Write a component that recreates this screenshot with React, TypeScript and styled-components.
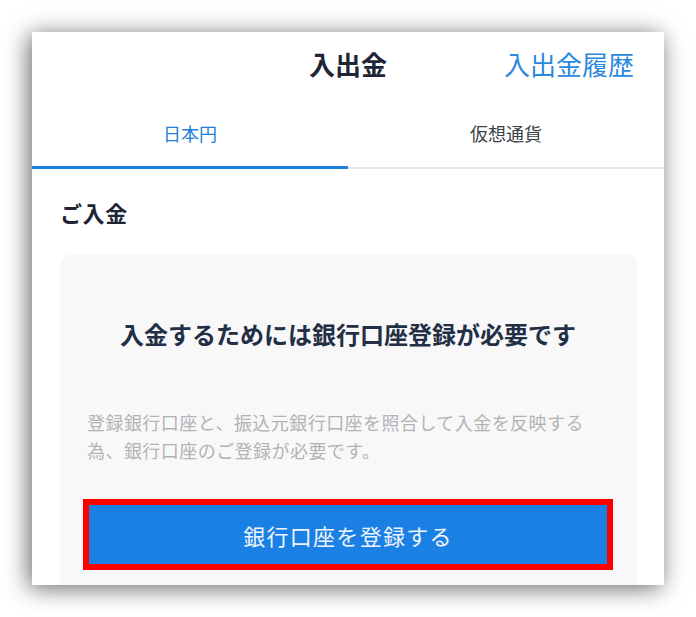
import React from "react";
import styled, { createGlobalStyle } from "styled-components";

const Global = createGlobalStyle`
  html, body { margin: 0; padding: 0; background: #ffffff; }
  body { font-family: "Noto Sans CJK JP", "Noto Sans", sans-serif; }
  * { box-sizing: border-box; }
`;

const Stage = styled.div`
  width: 696px;
  height: 617px;
  padding: 32px 0 0 32px;
  background: #ffffff;
`;

const Phone = styled.div`
  width: 632px;
  height: 553px;
  overflow: hidden;
  background: #ffffff;
  box-shadow: -3px 3px 22px rgba(0, 0, 0, 0.6);
`;

const Header = styled.header`
  height: 64px;
  display: grid;
  grid-template-columns: 1fr auto 1fr;
  align-items: center;
`;

const Title = styled.h1`
  grid-column: 2;
  margin: 0;
  font-size: 26px;
  line-height: 34px;
  font-weight: 700;
  color: #1e2535;
`;

const HistoryLink = styled.a`
  grid-column: 3;
  justify-self: end;
  padding-right: 30px;
  font-size: 26px;
  line-height: 34px;
  font-weight: 400;
  color: #2a88dd;
  text-decoration: none;
`;

const TabBar = styled.nav`
  display: flex;
  height: 73px;
  box-shadow: inset 0 -2px 0 #e8e8e8;
`;

const Tab = styled.div<{ $active?: boolean }>`
  flex: 1;
  display: flex;
  align-items: center;
  justify-content: center;
  padding-top: 4px;
  font-size: 18px;
  line-height: 24px;
  color: ${(p) => (p.$active ? "#1f80db" : "#3a3f48")};
  border-bottom: 3px solid ${(p) => (p.$active ? "#1b7fe0" : "transparent")};
`;

const Section = styled.section`
  padding: 28px 27px 0 28px;
`;

const SectionTitle = styled.h2`
  margin: 0 0 27px;
  font-size: 22px;
  line-height: 30px;
  font-weight: 700;
  letter-spacing: 0.6px;
  color: #1e2535;
`;

const Card = styled.div`
  background: #f8f8f9;
  border-radius: 12px;
  padding: 64px 24px 60px 23px;
`;

const CardHeading = styled.h3`
  margin: 0 0 58px;
  text-align: center;
  font-size: 24px;
  line-height: 32px;
  font-weight: 700;
  color: #232f45;
`;

const CardText = styled.p`
  margin: 0 0 35px;
  padding-left: 4px;
  font-size: 18px;
  line-height: 28px;
  letter-spacing: 0.45px;
  color: #b3b3b6;
`;

const RegisterButton = styled.button`
  display: block;
  width: 530px;
  height: 71px;
  border: 6px solid #ff0000;
  background: #1b80e4;
  color: #eef4fc;
  font-family: "Noto Sans CJK JP", "Noto Sans", sans-serif;
  font-size: 22px;
  font-weight: 400;
  letter-spacing: 1.3px;
  padding: 0;
  cursor: pointer;
`;

export default function App() {
  return (
    <>
      <Global />
      <Stage>
        <Phone>
          <Header>
            <Title>入出金</Title>
            <HistoryLink href="#">入出金履歴</HistoryLink>
          </Header>
          <TabBar>
            <Tab $active>日本円</Tab>
            <Tab>仮想通貨</Tab>
          </TabBar>
          <Section>
            <SectionTitle>ご入金</SectionTitle>
            <Card>
              <CardHeading>入金するためには銀行口座登録が必要です</CardHeading>
              <CardText>
                登録銀行口座と、振込元銀行口座を照合して入金を反映する
                <br />
                為、銀行口座のご登録が必要です。
              </CardText>
              <RegisterButton>銀行口座を登録する</RegisterButton>
            </Card>
          </Section>
        </Phone>
      </Stage>
    </>
  );
}
